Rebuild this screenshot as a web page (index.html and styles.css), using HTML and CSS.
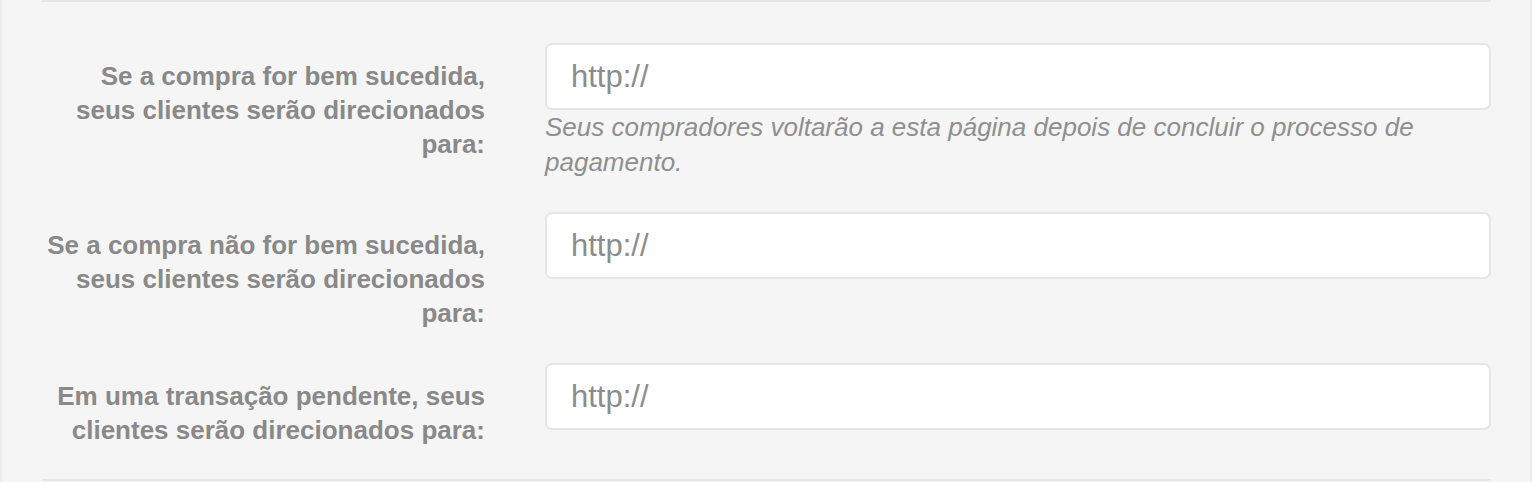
FILE: index.html
```html
<!DOCTYPE html>
<html lang="pt">
<head>
<meta charset="utf-8">
<link rel="stylesheet" href="styles.css">
</head>
<body>
<div class="panel">
  <div class="section">
    <div class="row">
      <label class="label">Se a compra for bem sucedida, seus clientes serão direcionados para:</label>
      <div class="field">
        <div class="input">http://</div>
        <p class="help">Seus compradores voltarão a esta página depois de concluir o processo de pagamento.</p>
      </div>
    </div>
    <div class="row">
      <label class="label">Se a compra não for bem sucedida, seus clientes serão direcionados para:</label>
      <div class="field">
        <div class="input">http://</div>
      </div>
    </div>
    <div class="row">
      <label class="label">Em uma transação pendente, seus clientes serão direcionados para:</label>
      <div class="field">
        <div class="input">http://</div>
      </div>
    </div>
  </div>
</div>
</body>
</html>
```
FILE: styles.css
```css
html, body {
  margin: 0;
  padding: 0;
  background: #f5f5f5;
}
body {
  font-family: "Liberation Sans", Arial, Helvetica, sans-serif;
}
.panel {
  height: 482px;
  box-sizing: border-box;
  border-left: 2px solid #ebebeb;
  border-right: 2px solid #ebebeb;
  background: #f5f5f5;
  overflow: hidden;
}
.section {
  margin: 0 39px 0 40px;
  border-top: 2px solid #e6e6e6;
  border-bottom: 2px solid #e6e6e6;
  padding: 41px 0 32px;
}
.row {
  display: grid;
  grid-template-columns: 443px 1fr;
  column-gap: 60px;
  margin-bottom: 33px;
}
.row + .row + .row {
  margin-top: 1px;
}
.row:last-child {
  margin-bottom: 0;
}
.label {
  text-align: right;
  font-weight: bold;
  font-size: 26px;
  line-height: 34px;
  color: #898989;
  padding-top: 16px;
}
.input {
  height: 67px;
  box-sizing: border-box;
  background: #fff;
  border: 2px solid #e6e6e6;
  border-radius: 7px;
  padding: 0 24px;
  display: flex;
  align-items: center;
  font-size: 31px;
  color: #8c8c8c;
}
.help {
  margin: 0 0 -1px;
  font-style: italic;
  font-size: 26px;
  line-height: 35px;
  color: #8f8f8f;
}
```
